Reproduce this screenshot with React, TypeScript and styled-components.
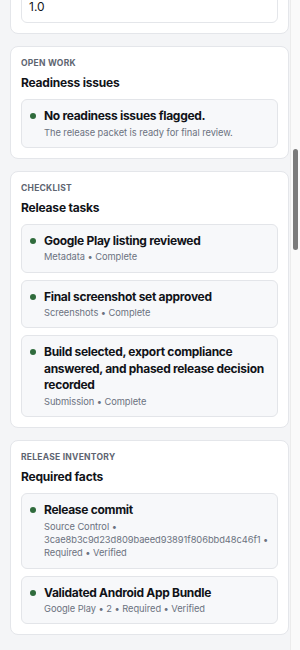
import styled, { createGlobalStyle } from "styled-components";

const GlobalStyle = createGlobalStyle`
  html, body {
    margin: 0;
    padding: 0;
    background: #f4f5f7;
    font-family: Inter, "Noto Sans", "Liberation Sans", sans-serif;
    color: #15171c;
    -webkit-font-smoothing: antialiased;
  }
`;

type Item = {
  title: string;
  meta: string[];
};

type Section = {
  eyebrow: string;
  heading: string;
  items: Item[];
};

const sections: Section[] = [
  {
    eyebrow: "Open work",
    heading: "Readiness issues",
    items: [
      {
        title: "No readiness issues flagged.",
        meta: ["The release packet is ready for final review."],
      },
    ],
  },
  {
    eyebrow: "Checklist",
    heading: "Release tasks",
    items: [
      { title: "Google Play listing reviewed", meta: ["Metadata", "Complete"] },
      { title: "Final screenshot set approved", meta: ["Screenshots", "Complete"] },
      {
        title:
          "Build selected, export compliance answered, and phased release decision recorded",
        meta: ["Submission", "Complete"],
      },
    ],
  },
  {
    eyebrow: "Release inventory",
    heading: "Required facts",
    items: [
      {
        title: "Release commit",
        meta: [
          "Source Control",
          "3cae8b3c9d23d809baeed93891f806bbd48c46f1",
          "Required",
          "Verified",
        ],
      },
      {
        title: "Validated Android App Bundle",
        meta: ["Google Play", "2", "Required", "Verified"],
      },
    ],
  },
];

const App = () => {
  return (
    <>
      <GlobalStyle />
      <Viewport>
        <Main>
          <Stack>
            <Card>
              <Input readOnly value="1.0" aria-label="Version" />
            </Card>
            {sections.map((section) => (
              <Card key={section.eyebrow}>
                <Eyebrow>{section.eyebrow}</Eyebrow>
                <Heading>{section.heading}</Heading>
                <ItemList>
                  {section.items.map((item) => (
                    <Row key={item.title}>
                      <Dot />
                      <RowBody>
                        <RowTitle>{item.title}</RowTitle>
                        <RowMeta>{item.meta.join("\u00a0\u2022 ")}</RowMeta>
                      </RowBody>
                    </Row>
                  ))}
                </ItemList>
              </Card>
            ))}
          </Stack>
        </Main>
        <ScrollTrack>
          <ScrollThumb />
        </ScrollTrack>
      </Viewport>
    </>
  );
};

const Viewport = styled.div`
  display: flex;
  height: 650px;
  overflow: hidden;
`;

const Main = styled.main`
  flex: 1;
  padding: 0 1px 0 10px;
  overflow: hidden;
`;

const Stack = styled.div`
  display: flex;
  flex-direction: column;
  gap: 12px;
  margin-top: -21px;
`;

const Card = styled.section`
  background: #ffffff;
  border: 1px solid #e4e6ea;
  border-radius: 8px;
  padding: 10px;
`;

const Eyebrow = styled.div`
  font-size: 8.5px;
  line-height: 12px;
  font-weight: 700;
  letter-spacing: 0.03em;
  text-transform: uppercase;
  color: #5e6571;
`;

const Heading = styled.h2`
  margin: 5px 0 0;
  font-size: 12px;
  line-height: 17px;
  font-weight: 700;
  letter-spacing: -0.2px;
  color: #111318;
`;

const Input = styled.input`
  display: block;
  box-sizing: border-box;
  width: 100%;
  height: 33px;
  padding: 0 7px;
  border: 1px solid #e4e6ea;
  border-radius: 6px;
  background: #ffffff;
  font-family: inherit;
  font-size: 12px;
  color: #15171c;
  outline: none;
`;

const ItemList = styled.div`
  display: flex;
  flex-direction: column;
  gap: 7px;
  margin-top: 8px;
`;

const Row = styled.div`
  display: grid;
  grid-template-columns: 6px 1fr;
  column-gap: 8px;
  padding: 8px 8px 8px 8px;
  background: #f7f8fa;
  border: 1px solid #e3e5e9;
  border-radius: 6px;
`;

const Dot = styled.span`
  width: 6px;
  height: 6px;
  margin-top: 5px;
  border-radius: 50%;
  background: #2f6b3c;
`;

const RowBody = styled.div`
  min-width: 0;
`;

const RowTitle = styled.div`
  padding-right: 2px;
  font-size: 12px;
  line-height: 16.5px;
  font-weight: 650;
  letter-spacing: -0.3px;
  color: #111318;
`;

const RowMeta = styled.div`
  margin-top: 1px;
  font-size: 9.3px;
  line-height: 13.3px;
  letter-spacing: -0.05px;
  color: #6b7280;
`;

const ScrollTrack = styled.div`
  width: 9px;
  flex-shrink: 0;
  background: #fafafa;
  border-left: 1px solid #ececec;
  padding-top: 149px;
`;

const ScrollThumb = styled.div`
  width: 5px;
  height: 101px;
  margin-left: 2px;
  border-radius: 3px;
  background: #7b7b7b;
`;

export default App;
